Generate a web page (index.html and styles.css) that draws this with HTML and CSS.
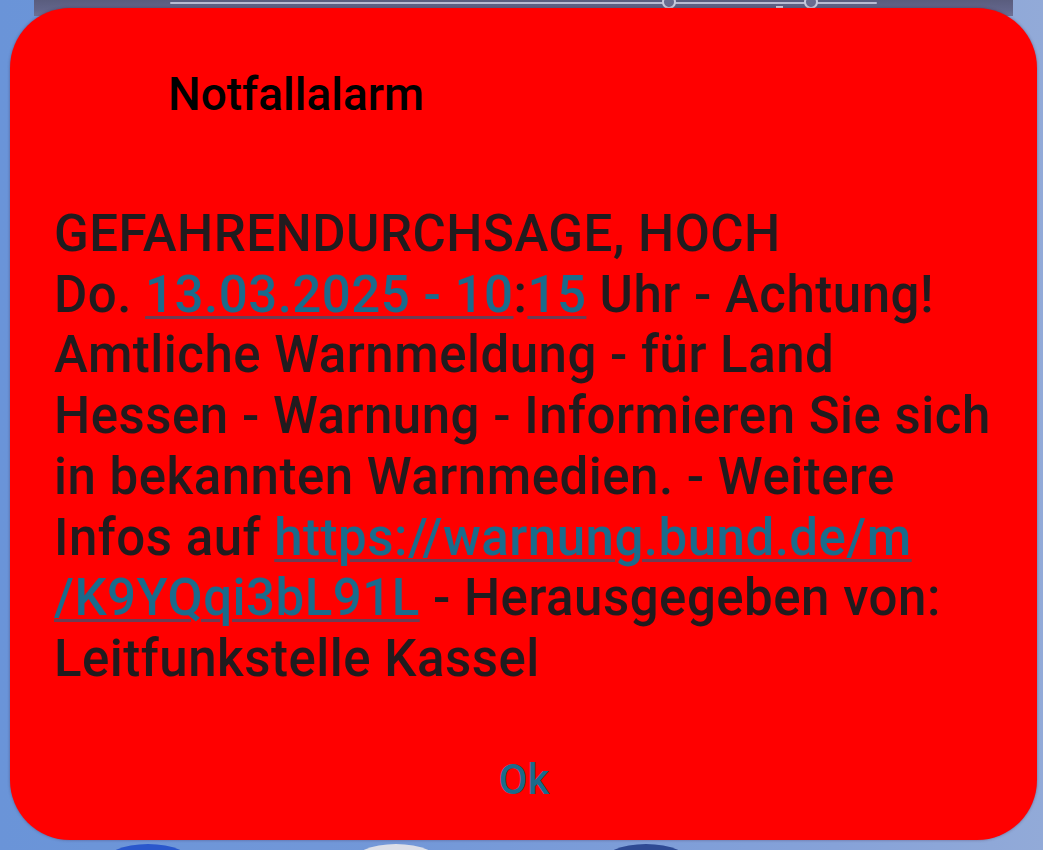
FILE: index.html
```html
<!DOCTYPE html>
<html lang="de">
<head>
<meta charset="utf-8">
<title>Notfallalarm</title>
<link rel="stylesheet" href="styles.css">
</head>
<body>
<div class="screen">
  <div class="backdrop">
    <div class="top-panel">
      <div class="panel-line"></div>
      <div class="panel-icons">
        <span class="ring"></span>
        <span class="tick"></span>
        <span class="ring"></span>
        <span class="dot"></span>
      </div>
    </div>
    <div class="spacer"></div>
    <div class="dock">
      <span class="bubble bubble-blue"></span>
      <span class="bubble bubble-white"></span>
      <span class="bubble bubble-dark"></span>
    </div>
  </div>

  <div class="dialog" role="alertdialog" aria-labelledby="dlg-title">
    <h1 class="dialog-title" id="dlg-title">Notfallalarm</h1>
    <p class="dialog-message">GEFAHRENDURCHSAGE, HOCH<br>Do. <a class="link" href="#">13.03.2025 - 10</a>:<a class="link" href="#">15</a> Uhr - Achtung!<br>Amtliche Warnmeldung - für Land<br>Hessen - Warnung - Informieren Sie sich<br>in bekannten Warnmedien. - Weitere<br>Infos auf <a class="link" href="#">https://warnung.bund.de/m<br>/K9YQqi3bL91L</a> - Herausgegeben von:<br>Leitfunkstelle Kassel</p>
    <div class="dialog-actions">
      <button class="btn-ok" type="button">Ok</button>
    </div>
  </div>
</div>
</body>
</html>
```

FILE: styles.css
```css
html, body {
  margin: 0;
  padding: 0;
}

body {
  width: 1043px;
  height: 850px;
  overflow: hidden;
  font-family: Roboto, "Noto Sans", "Liberation Sans", sans-serif;
}

.screen {
  position: relative;
  width: 1043px;
  height: 850px;
}

.backdrop {
  display: flex;
  flex-direction: column;
  height: 100%;
  background: linear-gradient(90deg, #6a94d8 0%, #7398d8 40%, #86a2d8 80%, #92aad8 100%);
}

.top-panel {
  margin: 0 30px 0 34px;
  height: 16px;
  background: linear-gradient(180deg, #5a5d7e 0%, #62658a 60%, #6e7196 100%);
  position: relative;
  display: flex;
  align-items: flex-start;
  padding: 2px 136px 0 136px;
  box-sizing: border-box;
}

.panel-line {
  flex: 1;
  height: 2px;
  background: #b9bbd2;
  border-radius: 1px;
}

.panel-icons {
  position: absolute;
  left: 628px;
  top: -5px;
  display: flex;
  align-items: flex-start;
}

.ring {
  width: 10px;
  height: 10px;
  border: 2px solid #c7c9dc;
  border-radius: 50%;
  background: #6a6d90;
}

.panel-icons .ring:first-child {
  margin-right: 100px;
}

.tick {
  width: 7px;
  height: 4px;
  margin-top: 11px;
  margin-right: 21px;
  background: #d0d2e2;
}

.dot {
  width: 3px;
  height: 3px;
  margin-top: 14px;
  margin-left: 40px;
  background: #d0d2e2;
  border-radius: 50%;
}

.spacer {
  flex: 1;
}

.dock {
  height: 6px;
  display: flex;
  align-items: flex-start;
  padding-left: 103px;
  overflow: hidden;
}

.bubble {
  width: 90px;
  height: 40px;
  border-radius: 50%;
  flex: none;
}

.bubble-blue {
  background: #2a57cc;
  margin-right: 158px;
}

.bubble-white {
  background: #dcdfe8;
  margin-right: 160px;
}

.bubble-dark {
  background: #2e4a94;
}

/* dialog overlay */
.dialog {
  position: absolute;
  left: 10px;
  top: 8px;
  width: 1027px;
  height: 832px;
  box-sizing: border-box;
  background: #ff0000;
  border-radius: 60px;
  box-shadow: 0 0 3px rgba(60, 30, 60, 0.45);
  padding: 59px 30px 0 44px;
  display: flex;
  flex-direction: column;
}

.dialog-title {
  margin: 0 0 0 114px;
  font-size: 46px;
  line-height: 55px;
  font-weight: 500;
  color: #000000;
}

.dialog-message {
  margin: 82px 0 0 0;
  font-size: 51px;
  line-height: 60.7px;
  letter-spacing: 0.5px;
  font-weight: 500;
  color: #211b1e;
  white-space: nowrap;
}

.link {
  color: #1a6b8c;
  text-decoration: underline;
  text-decoration-color: #6e3c52;
  text-decoration-thickness: 3px;
  text-underline-offset: 4px;
}

.dialog-actions {
  margin-top: 65px;
  display: flex;
  justify-content: center;
}

.btn-ok {
  background: none;
  border: none;
  padding: 0;
  margin: 0 13px 0 0;
  font-family: Roboto, "Noto Sans", "Liberation Sans", sans-serif;
  font-size: 42px;
  line-height: 50px;
  font-weight: 500;
  color: #1a6b8c;
}
```
